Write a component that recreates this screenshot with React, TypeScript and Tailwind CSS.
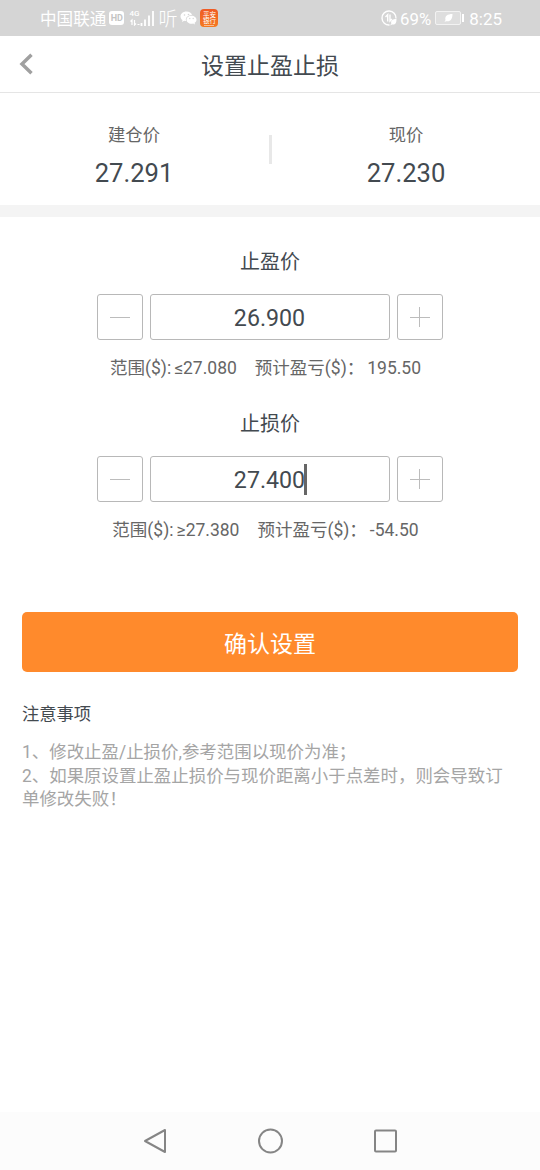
import { ReactNode } from 'react'

function StatusBar() {
    return (
        <div className="flex h-9 items-center bg-[#d5d5d5] pl-10 pr-[38px] text-white">
            <span className="pt-[4px] text-[16.6px] leading-none">中国联通</span>
            <span className="ml-[3px] flex h-[14px] w-[15px] shrink-0 items-center justify-center rounded-[3px] bg-white text-[9px] font-bold leading-none text-[#c4c4c4]">HD</span>
            <div className="ml-[5px] flex h-[18px] shrink-0">
                <div className="flex w-[11px] flex-col">
                    <span className="text-[8px] font-medium leading-[9px]">4G</span>
                    <svg width="11" height="8" viewBox="0 0 11 8" fill="none" stroke="#fff" strokeWidth="1.200">
                        <path d="M3 7V2L1.500 3.500M5.500 2v5L7 5.500M8.500 6.500h2" />
                    </svg>
                </div>
                <svg width="15" height="18" viewBox="11 0 15 18" fill="none" stroke="#fff" strokeWidth="1.800">
                    <path d="M12.500 17v-3M16 17v-6.500M20 17V6.500M24 17V2" />
                </svg>
            </div>
            <span className="ml-[3px] w-[19px] shrink-0 pt-[3px] text-[19px] font-light leading-none">听</span>
            <svg className="ml-[3px] shrink-0" width="17" height="14" viewBox="0 0 17 14">
                <path d="M6.500.5C3 .5.500 2.700.500 5.400c0 1.500.8 2.800 2 3.700L2 11l2.200-1.200c.6.200 1.200.2 1.800.2-.9-3.500 2-6 6-6C11.500 2 9.300.5 6.500.5z" fill="#fff" />
                <path d="M11.500 4.700c-2.800 0-5 1.800-5 4s2.200 4 5 4c.6 0 1.200 0 1.700-.2L15 13.500l-.4-1.700c1.200-.7 1.900-1.800 1.900-3.100 0-2.200-2.200-4-5-4z" fill="#fff" />
                <g fill="#d5d5d5">
                    <circle cx="4.500" cy="4" r=".8" />
                    <circle cx="8.500" cy="3.500" r=".8" />
                    <circle cx="9.800" cy="7.500" r=".7" />
                    <circle cx="13.200" cy="7.500" r=".7" />
                </g>
            </svg>
            <div className="ml-[3px] flex size-[18px] shrink-0 flex-col items-center rounded bg-linear-to-b from-[#ef5a24] to-[#f47a20] pt-[3px] text-[6.500px] leading-[6px]">
                <span>平安</span>
                <span>银行</span>
                <i className="mt-px h-px w-2.5 bg-white/50" />
            </div>

            <div className="ml-auto flex items-center">
                <svg width="16" height="16" viewBox="0 0 16 16" fill="none" stroke="#fff" strokeWidth="1.400">
                    <path d="M15 8.500A7 7 0 1 0 8.500 15" />
                    <path d="M6.700 11.500V4.800L4.500 7M9 4.500V11l2-2" />
                    <path d="M15.500 9c-4 0-6 1.500-5.200 4.600L9 15.500l2-1c3.500.5 4.500-1.500 4.500-5.500z" fill="#fff" stroke="none" />
                </svg>
                <span className="ml-[3px] pt-[2px] text-[16.800px] leading-none">69%</span>
                <svg className="ml-1" width="30" height="14" viewBox="0 0 30 14">
                    <rect x=".5" y=".5" width="25" height="13" rx="1.500" fill="#dedede" stroke="#f2f2f2" />
                    <path d="M17.500 3c-5 0-8 2-7 6l-1 2 1.500-.8C15.500 11 17.500 8 17.500 3z" fill="#fff" />
                    <path d="M28 3v8" stroke="#fff" strokeWidth="2" />
                </svg>
                <span className="ml-1 pt-[2px] text-[17px] leading-none">8:25</span>
            </div>
        </div>
    )
}

function Price({ label, value }: { label: string; value: string }) {
    return (
        <div className="flex w-[268px] flex-col items-center">
            <span className="text-[17.300px] leading-6 text-[#666]">{label}</span>
            <span className="mt-3 text-[25.600px] leading-7 text-[#434a50]">{value}</span>
        </div>
    )
}

function StepButton({ children }: { children: ReactNode }) {
    return (
        <button className="flex h-[46px] w-[46px] items-center justify-center rounded-[3px] border border-[#b8b8b8]">
            <svg width="20" height="20" viewBox="0 0 20 20" stroke="#bcbcbc" strokeWidth="1">
                {children}
            </svg>
        </button>
    )
}

type StepperProps = { title: string; value: string; range: string; profit: string; focused?: boolean }

function Stepper({ title, value, range, profit, focused }: StepperProps) {
    return (
        <div className="flex h-[161.500px] flex-col items-center">
            <h2 className="pt-px text-[20px] leading-7 text-[#434a50]">{title}</h2>
            <div className="mt-[18px] flex gap-[7px] pr-px">
                <StepButton>
                    <path d="M0 10.500h20" />
                </StepButton>
                <div className="flex h-[46px] w-[240px] items-center justify-center rounded-[3px] border border-[#b8b8b8] pt-[3px] text-[23.200px] text-[#434a50]">
                    <span className="relative">
                        {value}
                        {focused && <i className="absolute -right-[2px] top-px h-[31px] w-[3px] bg-[#666]" />}
                    </span>
                </div>
                <StepButton>
                    <path d="M0 10.500h20M9.500 0v20" />
                </StepButton>
            </div>
            <p className="mt-4 flex whitespace-pre pr-[9px] text-[17.500px] leading-6 text-[#666]">
                <span>范围($):</span>
                <span className="ml-[3px]">{range}</span>
                <span className="ml-[18px]">预计盈亏($)：</span>
                <span className="ml-[3px]">{profit}</span>
            </p>
        </div>
    )
}

export default function App() {
    return (
        <div className="flex h-[1170px] w-[540px] flex-col overflow-hidden bg-white font-[Roboto,'Noto_Sans_CJK_SC',sans-serif]">
            <StatusBar />

            <header className="flex h-[57px] items-center border-b border-[#e5e5e5] pl-[19px]">
                <svg width="14" height="22" viewBox="0 0 14 22" fill="none" stroke="#a0a0a0" strokeWidth="3.500">
                    <path d="M12.500 1.800L3 11l9.500 9.200" />
                </svg>
                <h1 className="flex-1 pr-[33px] pt-[6px] text-center text-[23px] text-[#434a50]">设置止盈止损</h1>
            </header>

            <section className="flex h-28 justify-between pt-[30px]">
                <Price label="建仓价" value="27.291" />
                <div className="mt-3 h-[29px] w-[3px] bg-[#e8e8e8]" />
                <Price label="现价" value="27.230" />
            </section>
            <div className="h-3 bg-[#f4f4f4]" />

            <main className="flex-1 pt-[30px]">
                <Stepper title="止盈价" value="26.900" range="≤27.080" profit="195.50" />
                <Stepper title="止损价" value="27.400" range="≥27.380" profit="-54.50" focused />

                <div className="px-[22px] pt-[42px]">
                    <button className="h-[60px] w-full rounded-[5px] bg-[#ff8a2c] pt-[6px] text-[23px] text-white">确认设置</button>
                    <h3 className="mt-[30px] text-[17.300px] leading-6 text-[#434a50]">注意事项</h3>
                    <div className="mt-[15px] text-[17.450px] leading-[23.700px] text-[#a5a5a5]">
                        <p>1、修改止盈/止损价,参考范围以现价为准；</p>
                        <p>2、如果原设置止盈止损价与现价距离小于点差时，则会导致订单修改失败！</p>
                    </div>
                </div>
            </main>

            <nav className="flex h-[58px] items-center justify-center gap-[90px] bg-[#fcfcfc]">
                <svg width="25" height="26" viewBox="0 0 25 26" fill="none" stroke="#858585" strokeWidth="2" strokeLinejoin="round">
                    <path d="M22 2v22L2 13z" />
                </svg>
                <svg width="26" height="26" viewBox="0 0 26 26" fill="none" stroke="#858585" strokeWidth="2">
                    <circle cx="12.500" cy="13" r="11.500" />
                </svg>
                <svg width="24" height="24" viewBox="0 0 24 24" fill="none" stroke="#858585" strokeWidth="2">
                    <rect x="1" y="1.500" width="21" height="21" rx="1" />
                </svg>
            </nav>
        </div>
    )
}
